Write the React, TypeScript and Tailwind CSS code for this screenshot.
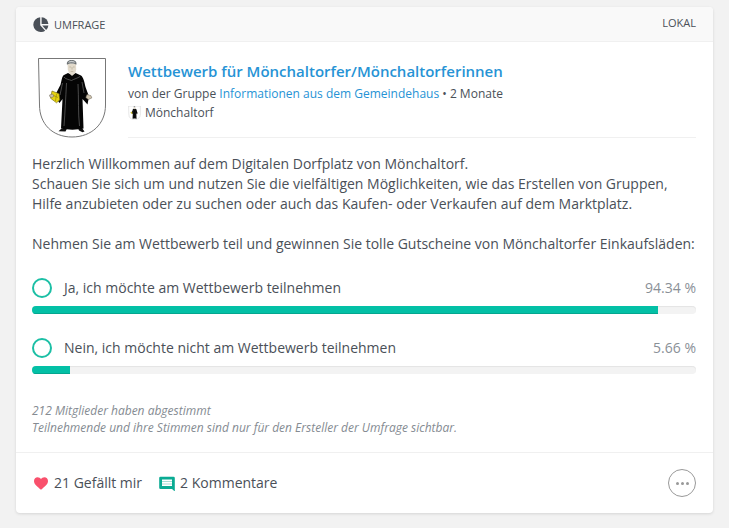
import React from 'react';

interface PollOption {
  id: string;
  label: string;
  percent: number;
}

const options: PollOption[] = [
  { id: 'ja', label: 'Ja, ich möchte am Wettbewerb teilnehmen', percent: 94.34 },
  { id: 'nein', label: 'Nein, ich möchte nicht am Wettbewerb teilnehmen', percent: 5.66 },
];

function PieIcon() {
  return (
    <svg viewBox="0 0 16 16" className="h-4 w-4" fill="#4a5058" aria-hidden="true">
      <path d="M7.200 .3v7.900l5 5.500A7.300 7.300 0 0 1 8.200 15 7.350 7.350 0 1 1 7.200.3z" />
      <path d="M8.600 .3a7.200 7.200 0 0 1 6.800 6.700H8.600z" />
      <path d="M9.200 8.500h6.200a7 7 0 0 1-2.300 4.500z" />
    </svg>
  );
}

function Crest({ className }: { className: string }) {
  return (
    <svg viewBox="0 0 68 80" className={className} role="img" aria-label="Wappen Mönchaltorf">
      <path
        d="M.5.500h67V47c0 19-14 32-33.500 32S1.500 66 1.500 47z"
        fill="#fff"
        stroke="#777"
      />
      {/* feet */}
      <path d="M26 70l-3 1-2.500 2.200 7 .3 1.500-3zM40 70l1 2.500 3.500 1.800 2-.8-2.500-3.500z" fill="#111" />
      {/* robe */}
      <path
        d="M30 15l-4.500 2.200c-1.800 2-2 6-3 9.500L18 35.500l1 6 2.500 3.500 3-4-1.500 29.500c7 1.500 16 1.500 22.500 0L44.500 41l5 5.500 1.500-8L47.500 29c-1-5-2-9.500-4.500-11.500L37.500 15 34 17z"
        fill="#050505"
      />
      <path
        d="M26 19c1 2 5 2.500 7.500 3.500C36 21 40 20 42 18.500M28.500 25c-.8 15-1.500 30-2.500 43M40 26c.8 14 0 29 1.500 42M44 24l2 11M24.500 25l-2.500 12"
        fill="none"
        stroke="#777"
        strokeWidth=".6"
      />
      {/* head */}
      <path d="M29.500 5.500h8.500l.2 6-.9 3.500-3.300 3-3-3-1.200-3.500z" fill="#e2dacb" />
      <path d="M29 6.800c-.8-3 1.500-4.800 4.700-4.800s5.600 1.800 4.600 4.800c-1.800-1.700-7.500-1.700-9.300 0z" fill="#6b7072" />
      <path d="M29.800 4.800c1.500-2.800 6.300-2.800 7.800 0-2-.9-5.800-.9-7.800 0z" fill="#c9cccd" />
      <path d="M31.300 9h1.700M35 9h1.700M34 9v2.500M32.700 13.500h2.600" stroke="#b0a48f" strokeWidth=".6" />
      {/* book */}
      <path d="M14 33l7 2.700.8 6.200-3.300 2.900-6-4.600z" fill="#e6d310" stroke="#6b6114" strokeWidth=".6" />
      <path d="M14.500 37l5.500 2.500M18.500 36l-1 7" stroke="#8a7b0c" strokeWidth=".6" />
      <path d="M11.500 37l3-1 1.500 2-2 1.500-2-.5zM49 36.500l4 1.200.8 2.300-3.500 1.500-2.500-2z" fill="#cfc4ae" stroke="#6b6355" strokeWidth=".5" />
    </svg>
  );
}

function HeartIcon() {
  return (
    <svg viewBox="0 0 14 13" className="h-[13px] w-3.5" fill="#f9506c" aria-hidden="true">
      <path d="M7 12.700C3.500 9.800 0 7.400 0 4 0 1.800 1.600.3 3.600.3 5 .3 6.300 1 7 2.200 7.700 1 9 .3 10.400.3c2 0 3.600 1.500 3.600 3.700 0 3.400-3.500 5.800-7 8.700z" />
    </svg>
  );
}

function CommentIcon() {
  return (
    <svg viewBox="0 0 16 16" className="h-4 w-4" aria-hidden="true">
      <path d="M1.500 1.800h13A1.300 1.300 0 0 1 15.800 3.100V16.500l-2.800-2.500H1.500A1.300 1.300 0 0 1 .2 12.700V3.100A1.300 1.300 0 0 1 1.500 1.800z" fill="#0aab93" />
      <path d="M3 4.500h10v6.500H3z" fill="#fff" />
      <path d="M3 6.500h10M3 9h10" stroke="#8fd6ca" strokeWidth=".8" />
    </svg>
  );
}

function PollRow({ option }: { option: PollOption }) {
  return (
    <div>
      <div className="flex h-5 items-center text-sm">
        <input
          type="radio"
          name="umfrage"
          id={option.id}
          className="mr-3 h-5 w-5 shrink-0 appearance-none rounded-full border-2 border-[#1bbfa5] bg-white checked:bg-[#03c0a6]"
        />
        <label htmlFor={option.id} className="flex-1">
          {option.label}
        </label>
        <span className="text-[#8a9097]">{option.percent} %</span>
      </div>
      <div className="mt-2 h-2 overflow-hidden rounded-full bg-[#f3f3f3] shadow-[inset_0_1px_1px_#e4e4e4]">
        <div
          className="h-full bg-[#03c0a6] shadow-[inset_0_-1px_0_#04a68f]"
          style={{ width: `${option.percent}%` }}
        />
      </div>
    </div>
  );
}

export default function App() {
  return (
    <div className="min-h-screen bg-[#f2f2f2] pt-[7px] pr-4 pb-3.5 pl-4 font-['Open_Sans','Noto_Sans',sans-serif] text-[#4a5058]">
      <article className="rounded bg-white shadow-[0_1px_3px_rgba(0,0,0,0.12)]">
        <header className="flex h-[35px] items-center justify-between rounded-t border-b border-[#f0f0f0] bg-[#f9f9f9] pr-[17px] pl-4 text-[11px] uppercase">
          <div className="flex items-center gap-[5px] pt-0.5 pl-px">
            <PieIcon />
            <span>Umfrage</span>
          </div>
          <span className="pb-0.5">Lokal</span>
        </header>

        <div className="py-4 pr-[17px] pl-4">
          <div className="flex gap-4">
            <div className="flex w-20 shrink-0 justify-center">
              <Crest className="h-20 w-[68px]" />
            </div>
            <div className="flex-1 border-b border-[#f0f0f0] pt-px pb-[15px]">
              <h1 className="mb-px text-[15px] leading-6 font-semibold">
                <a href="#wettbewerb" className="text-[#2693d5]">
                  Wettbewerb für Mönchaltorfer/Mönchaltorferinnen
                </a>
              </h1>
              <p className="text-xs leading-5">
                von der Gruppe{' '}
                <a href="#gruppe" className="text-[#2693d5]">
                  Informationen aus dem Gemeindehaus
                </a>{' '}
                • 2 Monate
              </p>
              <p className="flex items-center gap-1 text-xs leading-[18px]">
                <Crest className="h-3.5 w-[13px]" />
                Mönchaltorf
              </p>
            </div>
          </div>

          <div className="mt-4 text-sm leading-5">
            <p>
              Herzlich Willkommen auf dem Digitalen Dorfplatz von Mönchaltorf.
              <br />
              Schauen Sie sich um und nutzen Sie die vielfältigen Möglichkeiten, wie das Erstellen von Gruppen,
              Hilfe anzubieten oder zu suchen oder auch das Kaufen- oder Verkaufen auf dem Marktplatz.
            </p>
            <p className="mt-5">
              Nehmen Sie am Wettbewerb teil und gewinnen Sie tolle Gutscheine von Mönchaltorfer Einkaufsläden:
            </p>
          </div>

          <div className="mt-6 flex flex-col gap-6">
            {options.map((option) => (
              <PollRow key={option.id} option={option} />
            ))}
          </div>

          <p className="mt-7 text-xs leading-[17px] text-[#858b92] italic">
            212 Mitglieder haben abgestimmt
            <br />
            Teilnehmende und ihre Stimmen sind nur für den Ersteller der Umfrage sichtbar.
          </p>
        </div>

        <footer className="flex items-center border-t border-[#f0f0f0] py-4 pr-[17px] pl-4 text-sm">
          <button type="button" className="ml-0.5 flex items-center gap-1.5">
            <HeartIcon />
            21 Gefällt mir
          </button>
          <button type="button" className="ml-[17px] flex items-center gap-[5px]">
            <CommentIcon />
            2 Kommentare
          </button>
          <button
            type="button"
            aria-label="Mehr"
            className="ml-auto flex h-7 w-7 items-center justify-center gap-0.5 rounded-full border border-[#999]"
          >
            <span className="h-[3px] w-[3px] rounded-full bg-[#999]" />
            <span className="h-[3px] w-[3px] rounded-full bg-[#999]" />
            <span className="h-[3px] w-[3px] rounded-full bg-[#999]" />
          </button>
        </footer>
      </article>
    </div>
  );
}
